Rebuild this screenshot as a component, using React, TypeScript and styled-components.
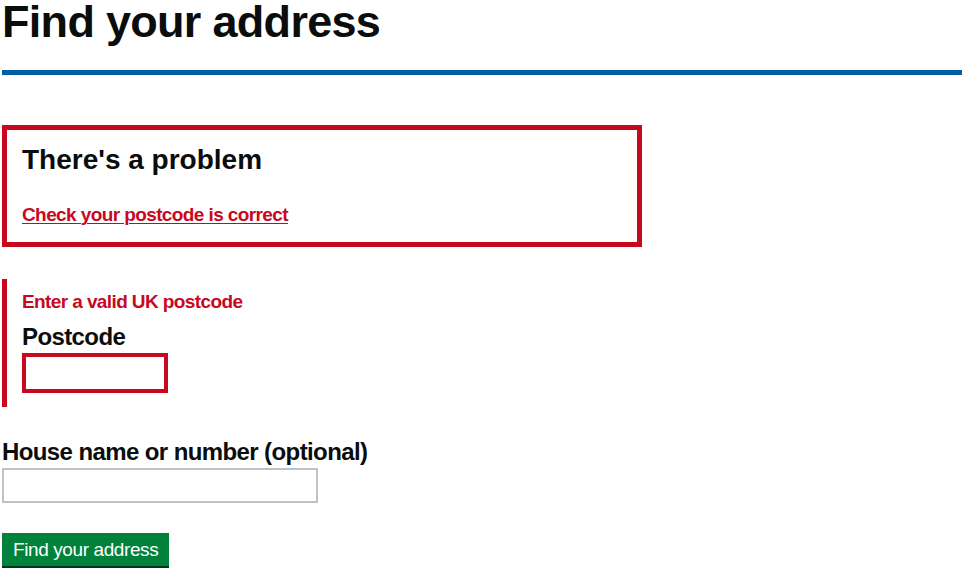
import React from 'react';
import styled, { createGlobalStyle } from 'styled-components';

const GlobalStyle = createGlobalStyle`
  body {
    margin: 0;
    background: #fff;
    color: #0b0c0c;
    font-family: 'Liberation Sans', Arial, sans-serif;
  }
`;

export default function App() {
  return (
    <>
      <GlobalStyle />
      <Page>
        <Header>
          <Title>Find your address</Title>
        </Header>

        <ErrorSummary role="alert">
          <SummaryTitle>There's a problem</SummaryTitle>
          <SummaryLink href="#postcode">Check your postcode is correct</SummaryLink>
        </ErrorSummary>

        <FormGroup $error>
          <ErrorMessage>Enter a valid UK postcode</ErrorMessage>
          <Label htmlFor="postcode">Postcode</Label>
          <Input id="postcode" $error $width={146} />
        </FormGroup>

        <FormGroup>
          <Label htmlFor="house">House name or number (optional)</Label>
          <Input id="house" $width={316} />
        </FormGroup>

        <Button type="button">Find your address</Button>
      </Page>
    </>
  );
}

const red = '#c8081e';

const Page = styled.main`
  width: 960px;
  margin: 0 2px;
`;

const Header = styled.header`
  padding-top: 1px;
  padding-bottom: 28px;
  border-bottom: 5px solid #005ea5;
  margin-bottom: 50px;
`;

const Title = styled.h1`
  margin: 0;
  font-size: 45px;
  line-height: 41px;
  font-weight: 700;
  letter-spacing: -0.7px;
`;

const ErrorSummary = styled.div`
  box-sizing: border-box;
  width: 640px;
  border: 5px solid ${red};
  padding: 15px;
  margin-bottom: 32px;
`;

const SummaryTitle = styled.h2`
  margin: 0 0 27px;
  font-size: 28px;
  line-height: 30px;
  font-weight: 700;
`;

const SummaryLink = styled.a`
  display: block;
  color: ${red};
  font-size: 19px;
  line-height: 25px;
  font-weight: 700;
  letter-spacing: -0.6px;
  text-decoration: underline;
  text-decoration-thickness: 1px;
  text-underline-offset: 2px;
`;

const FormGroup = styled.div<{ $error?: boolean }>`
  padding: ${(p) => (p.$error ? '10px 0 14px 15px' : '0')};
  border-left: ${(p) => (p.$error ? `5px solid ${red}` : 'none')};
  margin-bottom: 30px;
`;

const ErrorMessage = styled.span`
  display: block;
  margin-bottom: 8px;
  color: ${red};
  font-size: 19px;
  line-height: 25px;
  font-weight: 700;
  letter-spacing: -0.6px;
`;

const Label = styled.label`
  display: block;
  margin-bottom: 1px;
  font-size: 24px;
  line-height: 30px;
  font-weight: 700;
  letter-spacing: -0.6px;
`;

const Input = styled.input<{ $error?: boolean; $width: number }>`
  display: block;
  box-sizing: border-box;
  width: ${(p) => p.$width}px;
  height: ${(p) => (p.$error ? 40 : 35)}px;
  margin-top: ${(p) => (p.$error ? 1 : 0)}px;
  padding: 4px;
  border: ${(p) => (p.$error ? `4px solid ${red}` : '2px solid #bfc1c3')};
  border-radius: 0;
  background: #fff;
  font: 19px 'Liberation Sans', Arial, sans-serif;
  outline: none;
`;

const Button = styled.button`
  display: block;
  height: 33px;
  padding: 0 11px;
  margin-bottom: 2px;
  border: none;
  border-radius: 0;
  background: #00823b;
  box-shadow: 0 2px 0 #003618;
  color: #fff;
  font-family: 'Liberation Sans', Arial, sans-serif;
  font-size: 19px;
  line-height: 33px;
  letter-spacing: -0.4px;
  cursor: pointer;
`;
